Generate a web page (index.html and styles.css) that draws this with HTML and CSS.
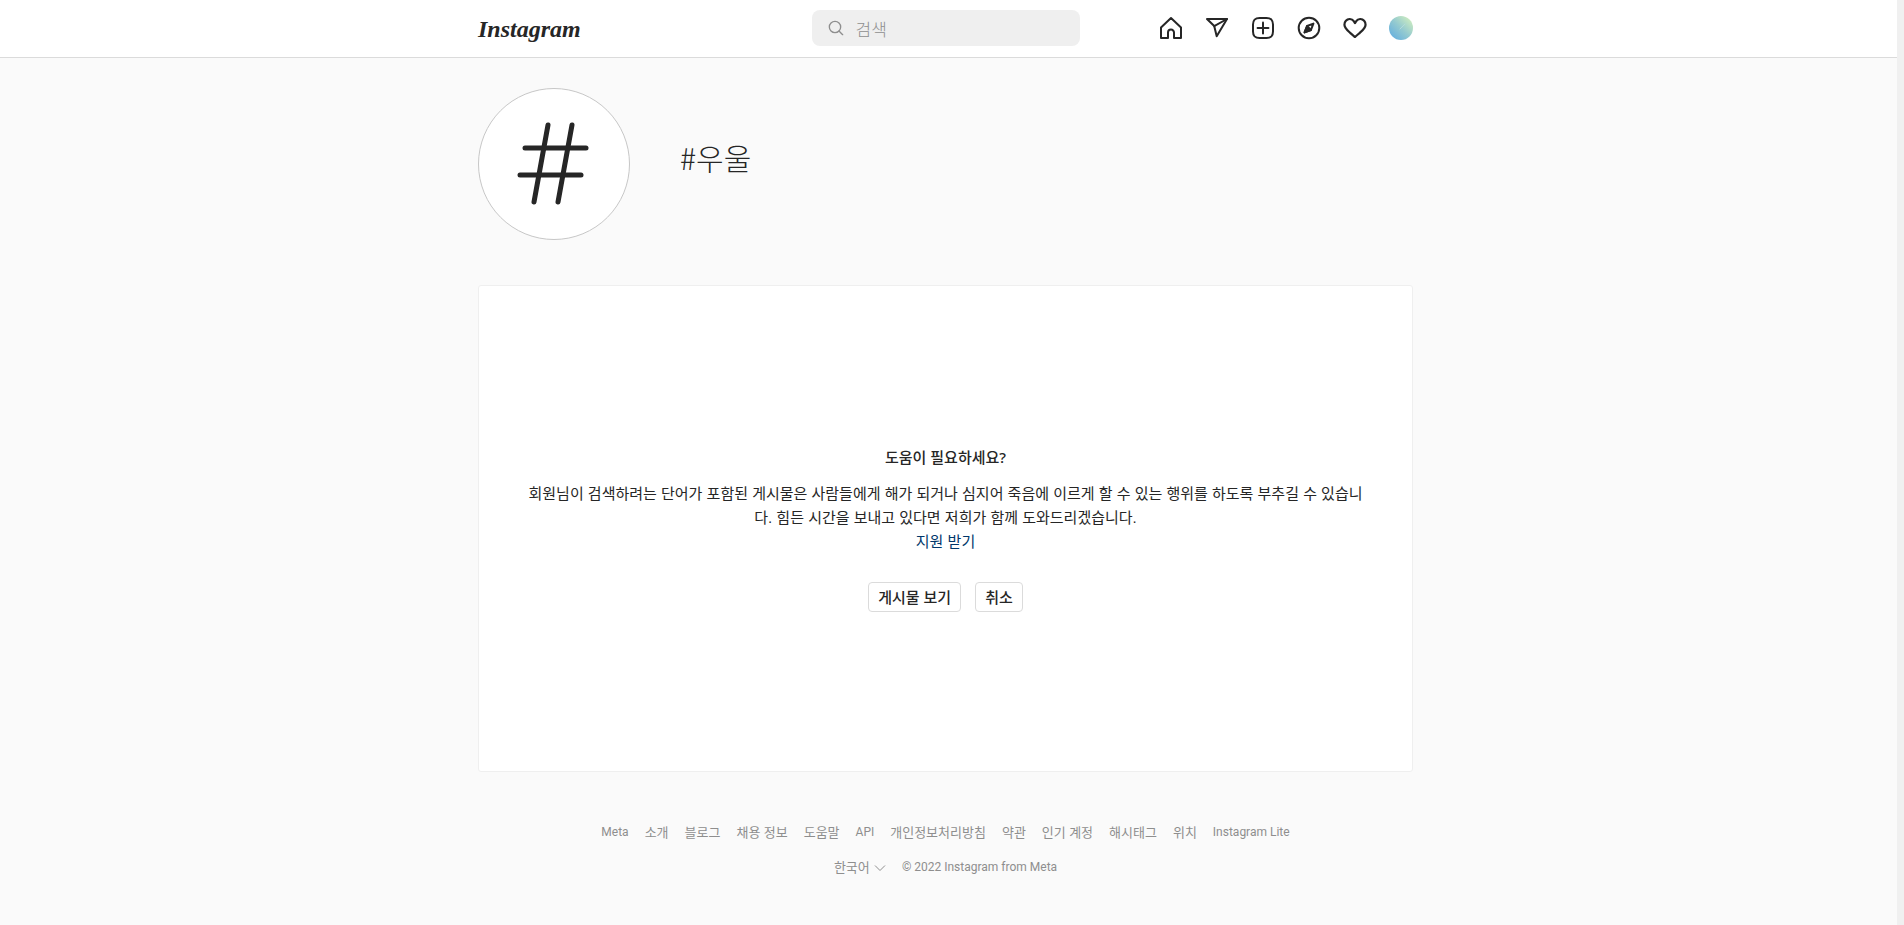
FILE: index.html
```html
<!DOCTYPE html>
<html lang="ko">
<head>
    <meta charset="UTF-8">
    <meta name="viewport" content="width=device-width, initial-scale=1.0">
    <title>#우울 - Instagram</title>
    <link rel="stylesheet" href="styles.css">
</head>
<body>

<div class="page">
    <header class="navbar">
        <div class="navbar-inner">
            <div class="navbar-left">
                <a href="#" class="logo">Instagram</a>
            </div>

            <label class="search">
                <svg class="search-icon" viewBox="0 0 24 24" aria-hidden="true">
                    <path d="M19 10.5A8.5 8.5 0 1 1 10.5 2a8.5 8.5 0 0 1 8.5 8.5Z"/>
                    <line x1="16.5" y1="16.5" x2="22" y2="22"/>
                </svg>
                <input type="text" class="search-input" placeholder="검색" aria-label="검색">
            </label>

            <nav class="nav-icons">
                <a href="#" aria-label="홈">
                    <svg viewBox="0 0 24 24">
                        <path d="M9.005 16.545a2.997 2.997 0 0 1 2.997-2.997A2.997 2.997 0 0 1 15 16.545V22h7V11.543L12 2 2 11.543V22h7.005Z"/>
                    </svg>
                </a>
                <a href="#" aria-label="메시지">
                    <svg viewBox="0 0 24 24">
                        <line x1="22" y1="3" x2="9.218" y2="10.083"/>
                        <polygon points="11.698 20.334 22 3.001 2 3.001 9.218 10.084 11.698 20.334"/>
                    </svg>
                </a>
                <a href="#" aria-label="새 게시물">
                    <svg viewBox="0 0 24 24">
                        <path d="M2 12v3.45c0 2.849.698 4.005 1.606 4.944.94.909 2.098 1.608 4.946 1.608h6.896c2.848 0 4.006-.7 4.946-1.608C21.302 19.455 22 18.3 22 15.45V8.552c0-2.849-.698-4.006-1.606-4.945C19.454 2.7 18.296 2 15.448 2H8.552c-2.848 0-4.006.699-4.946 1.607C2.698 4.547 2 5.703 2 8.552Z"/>
                        <line x1="6.545" y1="12" x2="17.455" y2="12"/>
                        <line x1="12" y1="6.545" x2="12" y2="17.455"/>
                    </svg>
                </a>
                <a href="#" aria-label="탐색">
                    <svg viewBox="0 0 24 24">
                        <polygon points="13.941 13.953 7.581 16.424 10.06 10.056 16.42 7.585 13.941 13.953"/>
                        <polygon class="filled" points="10.06 10.056 13.949 13.945 7.581 16.424 10.06 10.056"/>
                        <circle cx="12" cy="12" r="10.3"/>
                    </svg>
                </a>
                <a href="#" aria-label="활동">
                    <svg viewBox="1.2 1.2 21.6 21.6">
                        <path d="M16.792 3.904A4.989 4.989 0 0 1 21.5 9.122c0 3.072-2.652 4.959-5.197 7.222-2.512 2.243-3.865 3.469-4.303 3.752-.477-.309-2.143-1.823-4.303-3.752C5.141 14.072 2.5 12.167 2.5 9.122a4.989 4.989 0 0 1 4.708-5.218 4.21 4.21 0 0 1 3.675 1.941c.84 1.175.98 1.763 1.12 1.763s.278-.588 1.11-1.766a4.17 4.17 0 0 1 3.679-1.938Z"/>
                    </svg>
                </a>
                <a href="#" class="avatar" aria-label="프로필">
                    <svg viewBox="0 0 24 24">
                        <line x1="11" y1="13" x2="16" y2="8"/>
                    </svg>
                </a>
            </nav>
        </div>
    </header>

    <main class="content">
        <div class="tag-header">
            <div class="tag-picture">
                <svg viewBox="0 0 150 150" aria-hidden="true">
                    <line x1="69" y1="36" x2="55" y2="113"/>
                    <line x1="93" y1="36" x2="79" y2="113"/>
                    <line x1="46" y1="59" x2="107" y2="59"/>
                    <line x1="41" y1="86" x2="102" y2="86"/>
                </svg>
            </div>
            <h1 class="tag-name">#우울</h1>
        </div>

        <section class="help-card">
            <h2 class="help-title">도움이 필요하세요?</h2>
            <p class="help-text">회원님이 검색하려는 단어가 포함된 게시물은 사람들에게 해가 되거나 심지어 죽음에 이르게 할 수 있는 행위를 하도록 부추길 수 있습니다. 힘든 시간을 보내고 있다면 저희가 함께 도와드리겠습니다.</p>
            <a href="#" class="help-link">지원 받기</a>
            <div class="help-buttons">
                <button type="button" class="button">게시물 보기</button>
                <button type="button" class="button">취소</button>
            </div>
        </section>
    </main>

    <footer class="footer">
        <div class="footer-row">
            <a href="#" class="latin">Meta</a>
            <a href="#">소개</a>
            <a href="#">블로그</a>
            <a href="#">채용 정보</a>
            <a href="#">도움말</a>
            <a href="#" class="latin">API</a>
            <a href="#">개인정보처리방침</a>
            <a href="#">약관</a>
            <a href="#">인기 계정</a>
            <a href="#">해시태그</a>
            <a href="#">위치</a>
            <a href="#" class="latin">Instagram Lite</a>
        </div>
        <div class="footer-row">
            <div class="language">
                <select class="language-select" aria-label="언어">
                    <option>한국어</option>
                </select>
                <svg class="chevron" viewBox="0 0 12 12" aria-hidden="true">
                    <path d="M1 3.5l5 5 5-5"/>
                </svg>
            </div>
            <span class="latin">© 2022 Instagram from Meta</span>
        </div>
    </footer>
</div>

<div class="scroll-track"></div>

</body>
</html>
```

FILE: styles.css
```css
* {
    box-sizing: border-box;
}
body {
    margin: 0;
    min-height: 100vh;
    display: flex;
    background-color: #fafafa;
    color: #262626;
    font-family: "Noto Sans", "Noto Sans CJK KR", sans-serif;
    font-size: 15px;
    line-height: 24px;
}
a {
    color: inherit;
    text-decoration: none;
}
.page {
    flex: 1;
    min-width: 0;
}
.scroll-track {
    width: 7px;
    background-color: #f0f0f0;
}
.navbar {
    height: 58px;
    padding-right: 6px;
    background-color: #ffffff;
    border-bottom: 1px solid #dbdbdb;
}
.navbar-inner {
    max-width: 935px;
    height: 56px;
    margin: 0 auto;
    display: flex;
    align-items: center;
}
.navbar-left {
    flex: 1;
    padding-top: 4px;
}
.logo {
    font-family: "Liberation Serif", serif;
    font-size: 24px;
    font-style: italic;
    font-weight: bold;
}
.search {
    display: flex;
    align-items: center;
    gap: 12px;
    width: 268px;
    height: 36px;
    padding: 0 16px;
    border-radius: 8px;
    background-color: #efefef;
}
.search-icon {
    width: 16px;
    height: 16px;
    flex-shrink: 0;
    fill: none;
    stroke: #8e8e8e;
    stroke-width: 2;
    stroke-linecap: round;
}
.search-input {
    flex: 1;
    min-width: 0;
    padding: 0;
    border: none;
    outline: none;
    background: transparent;
    color: #262626;
    font-family: "Noto Sans CJK KR", sans-serif;
    font-size: 17px;
    font-weight: 300;
}
.search-input::placeholder {
    color: #8e8e8e;
}
.nav-icons {
    flex: 1;
    display: flex;
    justify-content: flex-end;
    align-items: center;
    gap: 22px;
}
.nav-icons a {
    width: 24px;
    height: 24px;
}
.nav-icons svg {
    display: block;
    width: 24px;
    height: 24px;
    fill: none;
    stroke: #262626;
    stroke-width: 2;
    stroke-linejoin: round;
    stroke-linecap: round;
}
.nav-icons .filled {
    fill: #262626;
}
.nav-icons .avatar {
    border-radius: 50%;
    background: linear-gradient(45deg, #5aa9e2, #94cad0 50%, #dcf5bc);
}
.nav-icons .avatar svg {
    stroke: #b4dcdc;
    stroke-width: 1;
}
.content {
    padding: 30px 6px 0 0;
}
.tag-header,
.help-card {
    max-width: 935px;
    margin: 0 auto;
}
.tag-header {
    display: flex;
    gap: 50px;
    margin-bottom: 45px;
}
.tag-picture {
    width: 152px;
    height: 152px;
    border: 1px solid #c7c7c7;
    border-radius: 50%;
    background-color: #ffffff;
}
.tag-picture svg {
    display: block;
    stroke: #262626;
    stroke-width: 5;
    stroke-linecap: round;
}
.tag-name {
    margin: 49px 0 0;
    font-family: "Noto Sans CJK KR", sans-serif;
    font-size: 30px;
    line-height: 40px;
    font-weight: 300;
}
.help-card {
    min-height: 487px;
    padding: 0 44px;
    display: flex;
    flex-direction: column;
    align-items: center;
    justify-content: center;
    text-align: center;
    background-color: #ffffff;
    border: 1px solid #efefef;
    border-radius: 3px;
}
.help-title {
    margin: 0 0 13px;
    font-size: 15px;
    font-weight: 500;
}
.help-text,
.help-link {
    margin: 0;
    font-family: "Liberation Sans", "Noto Sans CJK KR", sans-serif;
}
.help-link {
    color: #00376b;
}
.help-buttons {
    display: flex;
    gap: 14px;
    margin-top: 28px;
}
.button {
    height: 30px;
    padding: 0 9px;
    border: 1px solid #dbdbdb;
    border-radius: 4px;
    background-color: transparent;
    color: #262626;
    font-family: inherit;
    font-size: 15px;
    font-weight: 500;
    line-height: 24px;
    cursor: pointer;
}
.footer {
    padding: 51px 6px 48px 0;
    color: #8e8e8e;
    font-size: 13px;
    line-height: 19px;
}
.footer-row {
    display: flex;
    flex-wrap: wrap;
    justify-content: center;
    align-items: center;
    gap: 16px;
    margin-bottom: 16px;
}
.footer .latin {
    font-family: Roboto, sans-serif;
    font-size: 12px;
}
.language {
    display: flex;
    align-items: center;
    gap: 4px;
}
.language-select {
    appearance: none;
    padding: 0;
    border: none;
    background: transparent;
    color: #8e8e8e;
    font-family: inherit;
    font-size: 13px;
    line-height: 19px;
}
.chevron {
    width: 12px;
    height: 12px;
    fill: none;
    stroke: #8e8e8e;
}
```
